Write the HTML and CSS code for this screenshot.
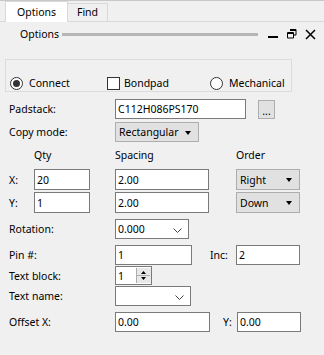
FILE: index.html
```html
<!DOCTYPE html>
<html lang="en">
<head>
    <meta charset="UTF-8">
    <title>Options</title>
    <link rel="stylesheet" href="styles.css">
</head>
<body>
    <div class="tabs">
        <div class="tab active">Options</div>
        <div class="tab">Find</div>
    </div>

    <div class="panel-head">
        <span class="panel-title">Options</span>
        <span class="grip"></span>
        <span class="win-btns">
            <svg class="ico" width="11" height="11" viewBox="0 0 11 11"><rect x="0" y="7" width="10" height="2" fill="#000"/></svg>
            <svg class="ico" width="10" height="10" viewBox="0 0 10 10"><path d="M3 .5h6v5.5h-2M.5 3.5h6v5.5h-6z" fill="none" stroke="#000"/><path d="M3 1.5h6M1 4.5h5.5" stroke="#000"/></svg>
            <svg class="ico" width="11" height="11" viewBox="0 0 11 11"><path d="M1 1l9 9M10 1l-9 9" stroke="#000" stroke-width="1.5"/></svg>
        </span>
    </div>

    <div class="group">
        <label class="opt"><span class="radio on"></span>Connect</label>
        <label class="opt"><span class="check"></span>Bondpad</label>
        <label class="opt"><span class="radio"></span>Mechanical</label>
    </div>

    <div class="form">
        <div class="row">
            <span class="lbl">Padstack:</span>
            <span class="field w131">C112H086PS170</span>
            <span class="btn-dots">...</span>
        </div>
        <div class="row gap3">
            <span class="lbl">Copy mode:</span>
            <span class="select w84">Rectangular<i class="arrow"></i></span>
        </div>
        <div class="row head">
            <span class="lbl-xy"></span>
            <span class="col-qty">Qty</span>
            <span class="col-sp">Spacing</span>
            <span>Order</span>
        </div>
        <div class="row xy">
            <span class="lbl-xy">X:</span>
            <span class="field w56">20</span>
            <span class="field w94 mid">2.00</span>
            <span class="select w64">Right<i class="arrow"></i></span>
        </div>
        <div class="row xy gap2">
            <span class="lbl-xy">Y:</span>
            <span class="field w56">1</span>
            <span class="field w94 mid">2.00</span>
            <span class="select w64">Down<i class="arrow"></i></span>
        </div>
        <div class="row">
            <span class="lbl">Rotation:</span>
            <span class="combo w74">0.000<svg class="chev" width="9" height="5" viewBox="0 0 9 5"><path d="M.5 .5l4 4 4-4" fill="none" stroke="#444"/></svg></span>
        </div>
        <div class="row">
            <span class="lbl">Pin #:</span>
            <span class="field w77">1</span>
            <span class="lbl-inc">Inc:</span>
            <span class="field w64">2</span>
        </div>
        <div class="row tight short">
            <span class="lbl">Text block:</span>
            <span class="spin">1
                <span class="spin-btns">
                    <svg width="13" height="15" viewBox="0 0 13 15"><path d="M4 6l2.5-3 2.5 3zM4 9l2.5 3 2.5-3z" fill="#000"/><path d="M0 7.5h13" stroke="#adadad"/></svg>
                </span>
            </span>
        </div>
        <div class="row tight">
            <span class="lbl">Text name:</span>
            <span class="combo w76"><svg class="chev" width="9" height="5" viewBox="0 0 9 5"><path d="M.5 .5l4 4 4-4" fill="none" stroke="#444"/></svg></span>
        </div>
        <div class="row">
            <span class="lbl">Offset X:</span>
            <span class="field w95">0.00</span>
            <span class="lbl-y">Y:</span>
            <span class="field w64">0.00</span>
        </div>
    </div>
</body>
</html>
```

FILE: styles.css
```css
body {
    margin: 0;
    background: #f0f0f0;
    color: #000;
    font-family: "Noto Sans", "Liberation Sans", sans-serif;
    font-size: 10.5px;
}

/* tabs */
.tabs {
    display: flex;
    align-items: flex-end;
    height: 20px;
    padding-left: 5px;
    border-top: 1px solid #c8c8c8;
    border-bottom: 1px solid #d9d9d9;
}

.tab {
    box-sizing: border-box;
    width: 40px;
    height: 18px;
    text-align: center;
    line-height: 16px;
    border: 1px solid #d9d9d9;
    border-left: none;
    border-bottom: none;
}

.tab.active {
    width: 63px;
    height: 21px;
    margin-bottom: -1px;
    line-height: 20px;
    background: #fff;
    border-left: 1px solid #d9d9d9;
}

/* panel header */
.panel-head {
    display: flex;
    align-items: center;
    height: 24px;
    padding-left: 20px;
}

.grip {
    flex: 1;
    height: 3px;
    margin-left: 3px;
    background: #b5b5b5;
}

.win-btns {
    display: flex;
    align-items: center;
    gap: 8px;
    margin-left: 10px;
    padding-right: 8px;
}

/* radio group */
.group {
    display: grid;
    grid-template-columns: 97px 103px auto;
    margin: 13px 32px 0 5px;
    padding: 16px 0 1px 4px;
    border: 1px solid #dcdcdc;
}

.opt {
    display: flex;
    align-items: center;
    height: 14px;
}

.radio {
    box-sizing: border-box;
    width: 13px;
    height: 13px;
    margin-right: 6px;
    border: 1px solid #333;
    border-radius: 50%;
    background: #fff;
    position: relative;
}

.radio.on::after {
    content: "";
    position: absolute;
    left: 2px;
    top: 2px;
    width: 7px;
    height: 7px;
    border-radius: 50%;
    background: #333;
}

.check {
    box-sizing: border-box;
    width: 13px;
    height: 13px;
    margin-right: 4px;
    border: 1px solid #333;
    background: #fff;
}

/* form */
.form {
    padding: 7px 0 0 9px;
}

.row {
    display: flex;
    align-items: center;
    height: 20px;
    margin-top: 6px;
}

.form .row:first-child { margin-top: 0; }
.row.gap3 { margin-top: 3px; }
.row.gap2 { margin-top: 2px; }
.row.tight { margin-top: 1px; }
.row.short { height: 19px; }
.row.xy { height: 21px; }

.row.head {
    height: 16px;
    margin-top: 5px;
}

.lbl { width: 106px; }
.lbl-xy { width: 25px; }
.col-qty { width: 81px; }
.col-sp { width: 121px; }
.lbl-inc { width: 26px; margin-left: 18px; }
.lbl-y { width: 14px; margin-left: 13px; }

.field, .combo, .select, .spin {
    box-sizing: border-box;
    display: flex;
    align-items: center;
    height: 100%;
    padding-left: 2px;
    background: #fff;
    border: 1px solid #7a7a7a;
    white-space: nowrap;
}

.field.mid { margin-left: 25px; margin-right: 27px; }

.w56 { width: 56px; }
.w64 { width: 64px; }
.w74 { width: 74px; }
.w76 { width: 76px; }
.w77 { width: 77px; }
.w84 { width: 84px; }
.w94 { width: 94px; }
.w95 { width: 95px; }
.w131 { width: 131px; }

.select {
    position: relative;
    padding-left: 3px;
    background: #e1e1e1;
    border-color: #adadad;
}

.arrow {
    position: absolute;
    right: 7px;
    top: 8px;
    border-left: 3.5px solid transparent;
    border-right: 3.5px solid transparent;
    border-top: 4px solid #000;
}

.combo {
    position: relative;
}

.chev {
    position: absolute;
    right: 6px;
    top: 8px;
}

.btn-dots {
    box-sizing: border-box;
    width: 17px;
    height: 19px;
    margin-left: 12px;
    text-align: center;
    line-height: 20px;
    background: #e1e1e1;
    border: 1px solid #adadad;
}

.spin {
    position: relative;
    width: 37px;
}

.spin-btns {
    position: absolute;
    right: 0;
    top: 1px;
    width: 14px;
    height: 15px;
    background: #e8e8e8;
    border-left: 1px solid #adadad;
    display: flex;
}
```
